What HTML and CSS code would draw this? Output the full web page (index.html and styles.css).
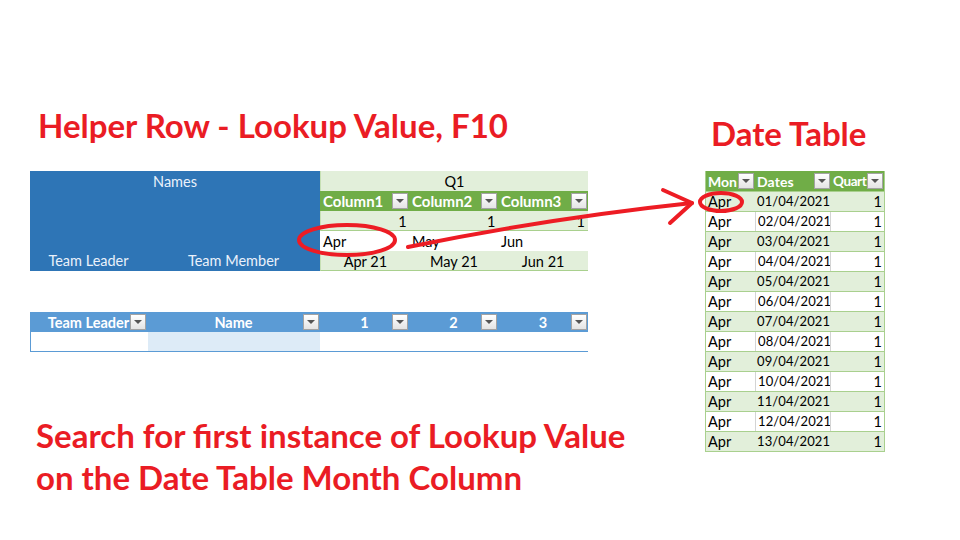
FILE: index.html
```html
<!DOCTYPE html>
<html>
<head>
<meta charset="utf-8">
<link rel="stylesheet" href="styles.css">
</head>
<body>
<div class="page">
  <div class="left">
    <h1 class="title">Helper Row - Lookup Value, F10</h1>

    <div class="t1">
      <div class="names">
        <div class="names-top">Names</div>
        <div class="names-bottom">
          <span class="nb1">Team Leader</span>
          <span class="nb2">Team Member</span>
        </div>
      </div>
      <div class="months">
        <div class="row q1">Q1</div>
        <div class="row ghead">
          <div class="c">Column1<span class="dd"></span></div>
          <div class="c">Column2<span class="dd"></span></div>
          <div class="c">Column3<span class="dd"></span></div>
        </div>
        <div class="row lg num">
          <div class="c">1</div><div class="c">1</div><div class="c">1</div>
        </div>
        <div class="row wh">
          <div class="c">Apr</div><div class="c">May</div><div class="c">Jun</div>
        </div>
        <div class="row lg ctr">
          <div class="c">Apr 21</div><div class="c">May 21</div><div class="c">Jun 21</div>
        </div>
      </div>
    </div>

    <div class="t2">
      <div class="bhead">
        <div class="c w117">Team Leader<span class="dd"></span></div>
        <div class="c w173">Name<span class="dd"></span></div>
        <div class="c w89">1<span class="dd"></span></div>
        <div class="c w89">2<span class="dd"></span></div>
        <div class="c w90">3<span class="dd"></span></div>
      </div>
      <div class="bbody">
        <div class="c w117"></div>
        <div class="c w173 lb"></div>
        <div class="c w268"></div>
      </div>
    </div>

    <p class="note">Search for first instance of Lookup Value<br>on the Date Table Month Column</p>
  </div>

  <div class="right">
    <h2 class="title dt">Date Table</h2>
    <div class="dtab">
      <div class="drow dhead">
        <div class="c m">Mon<span class="dd"></span></div>
        <div class="c d">Dates<span class="dd"></span></div>
        <div class="c q">Quart<span class="dd"></span></div>
      </div>
      <div class="drow g"><div class="c m">Apr</div><div class="c d">01/04/2021</div><div class="c q">1</div></div>
      <div class="drow w"><div class="c m">Apr</div><div class="c d">02/04/2021</div><div class="c q">1</div></div>
      <div class="drow g"><div class="c m">Apr</div><div class="c d">03/04/2021</div><div class="c q">1</div></div>
      <div class="drow w"><div class="c m">Apr</div><div class="c d">04/04/2021</div><div class="c q">1</div></div>
      <div class="drow g"><div class="c m">Apr</div><div class="c d">05/04/2021</div><div class="c q">1</div></div>
      <div class="drow w"><div class="c m">Apr</div><div class="c d">06/04/2021</div><div class="c q">1</div></div>
      <div class="drow g"><div class="c m">Apr</div><div class="c d">07/04/2021</div><div class="c q">1</div></div>
      <div class="drow w"><div class="c m">Apr</div><div class="c d">08/04/2021</div><div class="c q">1</div></div>
      <div class="drow g"><div class="c m">Apr</div><div class="c d">09/04/2021</div><div class="c q">1</div></div>
      <div class="drow w"><div class="c m">Apr</div><div class="c d">10/04/2021</div><div class="c q">1</div></div>
      <div class="drow g"><div class="c m">Apr</div><div class="c d">11/04/2021</div><div class="c q">1</div></div>
      <div class="drow w"><div class="c m">Apr</div><div class="c d">12/04/2021</div><div class="c q">1</div></div>
      <div class="drow g"><div class="c m">Apr</div><div class="c d">13/04/2021</div><div class="c q">1</div></div>
    </div>
  </div>

  <svg class="overlay" width="960" height="540" viewBox="0 0 960 540">
    <g fill="none" stroke="#ed1c24" stroke-width="4" stroke-linecap="round" stroke-linejoin="round">
      <ellipse cx="347" cy="240" rx="48" ry="15"/>
      <ellipse cx="721" cy="202" rx="21" ry="9"/>
      <path d="M408 247 Q 550 218 692 203"/>
      <path d="M663 190 L692 203 L670 223"/>
    </g>
  </svg>
</div>
</body>
</html>
```

FILE: styles.css
```css
* { box-sizing: border-box; }
html, body { margin: 0; padding: 0; background: #fff; }
body { font-family: Lato, "Open Sans", sans-serif; color: #000; }

.page {
  position: relative;
  width: 960px;
  height: 540px;
  display: flex;
  overflow: hidden;
}

.left {
  width: 558px;
  margin-left: 30px;
  display: flex;
  flex-direction: column;
}

.right {
  width: 180px;
  margin-left: 117px;
  display: flex;
  flex-direction: column;
}

.title {
  margin: 107px 0 0 8px;
  font-family: Lato, sans-serif;
  font-weight: bold;
  font-size: 33px;
  line-height: 36px;
  color: #ea1c24;
  white-space: nowrap;
}
.title.dt { margin: 115px 0 0 6px; }

.c {
  position: relative;
  font-size: 14.5px;
  line-height: 21px;
  height: 20px;
  white-space: nowrap;
  overflow: hidden;
}

/* dropdown button */
.dd {
  position: absolute;
  right: 1px;
  top: 2px;
  width: 16px;
  height: 16px;
  border: 1px solid #a3a3a3;
  background: linear-gradient(#ffffff, #e4e4e4);
}
.dd::after {
  content: "";
  position: absolute;
  left: 3px;
  top: 5px;
  border-left: 4px solid transparent;
  border-right: 4px solid transparent;
  border-top: 4px solid #555;
}

/* table 1 */
.t1 {
  margin-top: 28px;
  display: flex;
  height: 100px;
}
.names {
  width: 290px;
  background: #2e75b6;
  color: #eaf1fb;
  display: flex;
  flex-direction: column;
  justify-content: space-between;
  font-size: 14.5px;
  line-height: 21px;
}
.names-top { text-align: center; }
.names-bottom { display: flex; }
.nb1 { width: 117px; text-align: center; }
.nb2 { width: 173px; text-align: center; }

.months {
  width: 268px;
  display: flex;
  flex-direction: column;
}
.row {
  display: flex;
  height: 20px;
  font-size: 14.5px;
  line-height: 21px;
}
.row .c { width: 89px; padding: 0 3px; }
.row .c:last-child { width: 90px; }
.q1 { justify-content: center; background: #e2efda; border-left: 1px solid #c6e0b4; }
.ghead { background: #70ad47; color: #fff; font-weight: bold; }
.ghead .c { color: #fff; font-size: 15px; }
.lg { background: #e2efda; border-bottom: 1px solid #a9d08e; border-left: 1px solid #c6e0b4; }
.wh { background: #fff; }
.num .c { text-align: right; }
.ctr .c { text-align: center; }

/* table 2 */
.t2 {
  margin-top: 41px;
  width: 558px;
}
.bhead {
  display: flex;
  background: #5b9bd5;
  color: #fff;
  font-weight: bold;
}
.bhead .c { text-align: center; }
.bbody {
  display: flex;
  height: 20px;
  border-left: 1px solid #5b9bd5;
  border-bottom: 1px solid #5b9bd5;
}
.bbody .c { height: 19px; }
.w117 { width: 117px; }
.w173 { width: 173px; }
.w89 { width: 89px; }
.w90 { width: 90px; }
.w268 { width: 268px; }
.lb { background: #ddebf7; }

.note {
  margin: 62px 0 0 6px;
  font-weight: bold;
  font-size: 33px;
  line-height: 42px;
  color: #ea1c24;
  white-space: nowrap;
}

/* date table */
.dtab {
  margin-top: 20px;
  width: 180px;
  border-left: 1px solid #a9d08e;
  border-right: 1px solid #a9d08e;
  border-bottom: 1px solid #a9d08e;
}
.drow { display: flex; height: 20px; }
.drow .c { padding: 0 2px; }
.drow .m { width: 49px; }
.drow .d { width: 76px; font-size: 13px; letter-spacing: 0.1px; }
.drow .q { width: 53px; text-align: right; }
.dhead { background: #70ad47; color: #fff; font-weight: bold; }
.dhead .c { font-size: 14px; }
.dhead .q { text-align: left; font-size: 13.5px; letter-spacing: -0.4px; }
.drow.g { background: #e2efda; border-top: 1px solid #a9d08e; }
.drow.w { background: #fff; border-top: 1px solid #a9d08e; }
.drow.g .c, .drow.w .c { height: 19px; line-height: 19px; }
.drow.w .d { border-left: 1px solid #d4d4d4; border-right: 1px solid #d4d4d4; }

.overlay {
  position: absolute;
  left: 0;
  top: 0;
  pointer-events: none;
}
```
